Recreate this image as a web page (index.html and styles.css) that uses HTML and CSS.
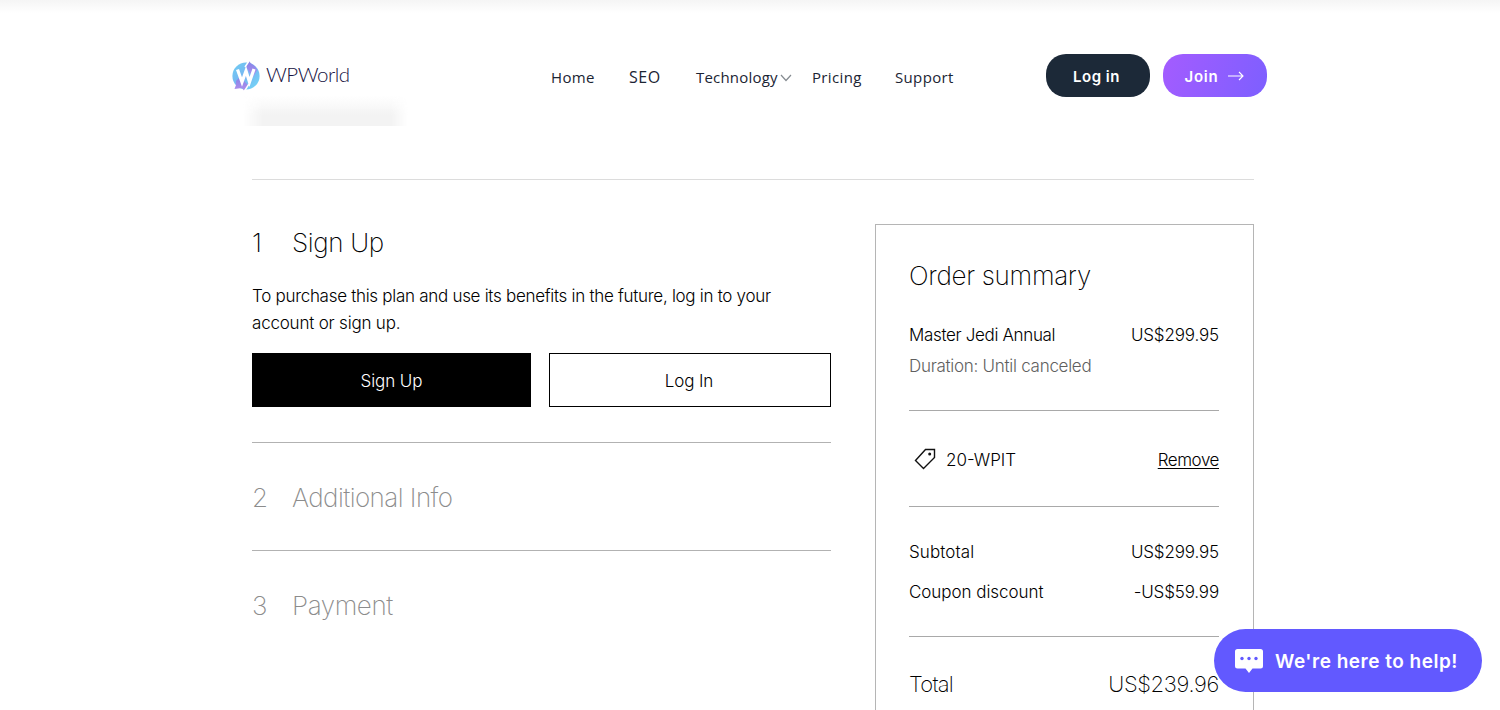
FILE: index.html
```
<!DOCTYPE html>
<html lang="en">
<head>
  <meta charset="UTF-8">
  <title>Checkout | WPWorld</title>
  <meta name="viewport" content="width=device-width, initial-scale=1.0">
  <link rel="stylesheet" href="styles.css">
</head>
<body>

<header class="header">
  <div class="header-inner">
    <a class="logo" href="#">
      <svg class="logo-mark" viewBox="0 0 28 30">
        <defs>
          <linearGradient id="logoBlue" x1="0" y1="0" x2="1" y2="1">
            <stop offset="0" stop-color="#6fd0f2"/>
            <stop offset="0.5" stop-color="#78b4f2"/>
            <stop offset="1" stop-color="#72dcf7"/>
          </linearGradient>
          <linearGradient id="logoPurple" x1="0" y1="0" x2="0" y2="1">
            <stop offset="0" stop-color="#8583e8"/>
            <stop offset="1" stop-color="#b08fec"/>
          </linearGradient>
        </defs>
        <circle cx="14" cy="15" r="13.6" fill="url(#logoBlue)"/>
        <path d="M17 0 L19 2.500 C22 4 24 6 25 9 L21 16 L14 6 Z" fill="url(#logoPurple)"/>
        <path d="M4 20 L8 16 L16 24 L12 29.500 L10 27 L2.500 28 L4 24 Z" fill="url(#logoPurple)"/>
        <path d="M17 0 L13 6 M17 23 L12.500 30" stroke="#fff" stroke-width="1.500"/>
        <path d="M5.500 8.500 L10 21 L14 10 L17.500 21 L22 8" fill="none" stroke="#fff" stroke-width="3.200"/>
      </svg>
      <span class="logo-text">WPWorld</span>
    </a>
    <nav class="nav">
      <a class="nav-home" href="#">Home</a>
      <a class="nav-seo" href="#">SEO</a>
      <a class="nav-tech" href="#">Technology</a>
      <svg class="chevron" viewBox="0 0 12 8"><path d="M1 1 L6 6.500 L11 1" fill="none" stroke="#858b91" stroke-width="1.200"/></svg>
      <a class="nav-pricing" href="#">Pricing</a>
      <a class="nav-support" href="#">Support</a>
    </nav>
    <div class="header-buttons">
      <button class="pill login">Log in</button>
      <button class="pill join">Join
        <svg class="arrow" viewBox="0 0 16 10"><path d="M0 5 H15 M11 1 L15 5 L11 9" fill="none" stroke="#fff" stroke-width="1.100"/></svg>
      </button>
    </div>
  </div>
  <div class="header-shade"></div>
</header>

<main class="checkout">
  <section class="steps">
    <div class="step">
      <h2 class="step-title"><span class="num">1</span><span class="t-signup">Sign Up</span></h2>
      <p class="step-text"><span class="line-1">To purchase this plan and use its benefits in the future, log in to your</span><br><span class="line-2">account or sign up.</span></p>
      <div class="step-buttons">
        <button class="btn btn-dark">Sign Up</button>
        <button class="btn btn-light">Log In</button>
      </div>
    </div>
    <div class="step muted">
      <h2 class="step-title"><span class="num">2</span><span class="t-info">Additional Info</span></h2>
    </div>
    <div class="step muted">
      <h2 class="step-title"><span class="num">3</span><span class="t-pay">Payment</span></h2>
    </div>
  </section>

  <aside class="summary">
    <h2 class="summary-title">Order summary</h2>
    <div class="block plan">
      <div class="row"><span class="s-plan">Master Jedi Annual</span><span class="price">US$299.95</span></div>
      <p class="duration">Duration: Until canceled</p>
    </div>
    <div class="block coupon">
      <svg class="tag" viewBox="0 0 22 22"><path d="M11.500 1.500 L20.500 1.500 L20.500 9.500 L9.500 20.500 L1.500 12.500 Z" fill="none" stroke="#111" stroke-width="1.400"/><circle cx="15.700" cy="6" r="1.500" fill="#111"/></svg>
      <span class="code">20-WPIT</span>
      <a class="remove" href="#">Remove</a>
    </div>
    <div class="block costs">
      <div class="row"><span class="s-sub">Subtotal</span><span class="price">US$299.95</span></div>
      <div class="row"><span class="s-disc">Coupon discount</span><span class="price">-US$59.99</span></div>
    </div>
    <div class="row total"><span class="t-total">Total</span><span class="price-total">US$239.96</span></div>
  </aside>
</main>

<button class="chat">
  <svg class="chat-icon" viewBox="0 0 28 24">
    <path d="M2.500 0 H25.500 Q28 0 28 2.500 V17 Q28 19.500 25.500 19.500 H17.500 L14 24 L10.500 19.500 H2.500 Q0 19.500 0 17 V2.500 Q0 0 2.500 0 Z" fill="#fff"/>
    <circle cx="7" cy="9.500" r="1.700" fill="#6259ff"/>
    <circle cx="14" cy="9.500" r="1.700" fill="#6259ff"/>
    <circle cx="21" cy="9.500" r="1.700" fill="#6259ff"/>
  </svg>
  <span class="chat-text">We're here to help!</span>
</button>

</body>
</html>
```
FILE: styles.css
```
* { box-sizing: border-box; }
body { margin: 0; height: 710px; overflow: hidden; background: #fff; color: #000; font-family: Inter, "Liberation Sans", sans-serif; font-size: 17px; font-weight: 300; }
h2, p { margin: 0; font-weight: 200; }
a { color: inherit; text-decoration: none; }
button { font-family: inherit; cursor: pointer; }
svg { display: block; flex: none; }
span { white-space: nowrap; }

/* Header */
.header { position: relative; height: 126px; background: linear-gradient(#f5f5f5 0, #f8f8f8 4px, #fff 13px); }
.header-inner { display: flex; align-items: flex-start; width: 1036px; margin: 0 auto; padding-top: 54px; }
.logo { display: flex; width: 319px; padding-top: 6px; color: #16123f; }
.logo-mark { width: 28px; height: 30px; margin-top: 1px; }
.logo-text { margin-left: 6px; font-family: Lato, sans-serif; font-weight: 300; font-size: 20.5px; line-height: 29px; letter-spacing: -0.5px; }
.nav { display: flex; width: 495px; padding-top: 12px; color: #1b2433; font-family: "Open Sans", sans-serif; font-weight: 400; font-size: 15px; line-height: 23px; letter-spacing: 0.35px; }
.nav a { white-space: nowrap; }
.nav-home { width: 78px; }
.nav-seo { width: 67px; font-size: 16px; letter-spacing: 0.5px; }
.nav-tech { width: 83px; letter-spacing: 0.2px; }
.chevron { width: 12px; height: 8px; margin: 8px 20px 0 1px; }
.nav-pricing { width: 83px; }
.header-buttons { display: flex; gap: 13px; }
.pill { display: flex; align-items: center; justify-content: center; width: 104px; height: 43px; padding: 1px 0 0 0; border: none; border-radius: 20px; color: #fff; font-weight: 600; font-size: 15px; letter-spacing: 0.5px; }
.login { background: #1c2938; padding-right: 3px; }
.join { gap: 9px; background: linear-gradient(110deg, #a45cff, #7d5fff); letter-spacing: 0.8px; padding-right: 2px; }
.arrow { width: 16px; height: 10px; }
.header-shade { position: absolute; left: 243px; bottom: 0; width: 165px; height: 30px; background: linear-gradient(rgba(242,242,242,0), #f3f3f3 65%); -webkit-mask-image: linear-gradient(90deg, transparent, #000 20px, #000 148px, transparent); mask-image: linear-gradient(90deg, transparent, #000 20px, #000 148px, transparent); }

/* Checkout */
.checkout { display: flex; justify-content: space-between; width: 1002px; margin: 53px 0 0 252px; padding-top: 44px; border-top: 1px solid #dcdcdc; }
.steps { width: 579px; }
.step { height: 108px; padding-top: 37px; border-bottom: 1px solid #b2b2b2; }
.step:first-child { height: 219px; padding-top: 1px; }
.step:last-child { border-bottom: none; }
.step-title { display: flex; font-size: 26px; line-height: 36px; }
.num { width: 40px; }
.t-signup { letter-spacing: -0.35px; }
.t-info { letter-spacing: -0.55px; }
.t-pay { letter-spacing: -0.4px; }
.muted { color: #8c8c8c; }
.step-text { margin-top: 22px; font-size: 17px; font-weight: 300; line-height: 27px; }
.line-1 { letter-spacing: -0.29px; }
.line-2 { letter-spacing: -0.2px; }
.step-buttons { display: flex; gap: 18px; margin-top: 16px; }
.btn { height: 54px; border: 1px solid #000; font-weight: 300; font-size: 17px; letter-spacing: -0.1px; padding: 2px 0 0; }
.btn-dark { width: 279px; background: #000; color: #fff; }
.btn-light { width: 282px; padding-right: 2px; background: #fff; color: #000; }

/* Order summary */
.summary { width: 379px; height: 520px; padding: 33px 34px 0 33px; border: 1px solid #b5b5b5; }
.summary-title { font-size: 26px; line-height: 36px; letter-spacing: -0.3px; }
.block { border-bottom: 1px solid #a9a9a9; }
.row { display: flex; justify-content: space-between; line-height: 28px; }
.plan { height: 117px; padding-top: 27px; }
.s-plan { letter-spacing: -0.34px; }
.s-sub { letter-spacing: 0.1px; }
.s-disc { letter-spacing: -0.05px; }
.price { letter-spacing: -0.15px; }
.duration { color: #5f5f5f; line-height: 28px; margin-top: 3px; font-weight: 300; letter-spacing: -0.28px; }
.coupon { display: flex; align-items: center; height: 96px; padding: 1px 0 0 5px; }
.tag { width: 22px; height: 22px; }
.code { margin-left: 10px; padding-top: 2px; }
.remove { margin-left: auto; padding-top: 2px; letter-spacing: -0.45px; text-decoration: underline; text-underline-offset: 2px; text-decoration-thickness: 1px; }
.costs { height: 130px; padding-top: 31px; }
.costs .row + .row { margin-top: 12px; }
.total { padding-top: 29px; font-size: 22px; line-height: 36px; font-weight: 200; }
.t-total { letter-spacing: -0.75px; }
.price-total { letter-spacing: -0.35px; }

/* Help button */
.chat { position: fixed; left: 1214px; top: 629px; width: 268px; height: 63px; display: flex; align-items: center; gap: 12px; padding: 0 0 0 21px; border: none; border-radius: 32px; background: #6259ff; color: #fff; font-weight: 600; font-size: 19px; white-space: nowrap; }
.chat-icon { width: 28px; height: 24px; }
.chat-text { padding-top: 2px; letter-spacing: 0.5px; }
```
